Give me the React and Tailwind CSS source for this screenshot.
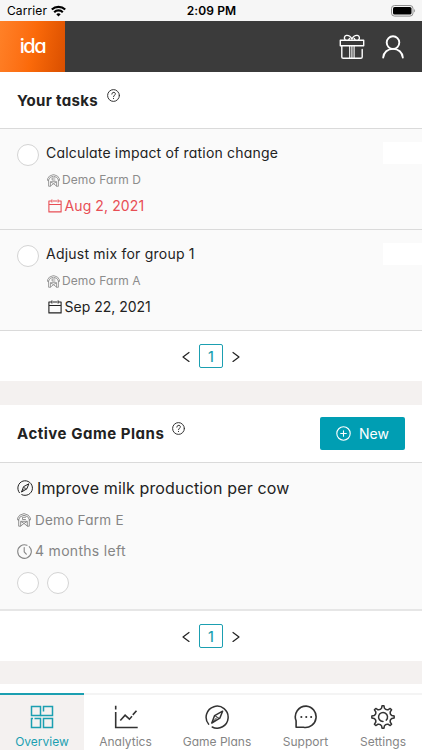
const strokeProps = {
  fill: 'none',
  stroke: 'currentColor',
  strokeLinecap: 'round',
  strokeLinejoin: 'round',
};

const WifiIcon = () => (
  <svg width="15" height="12" viewBox="0 0 15 12" fill="none" stroke="#000" strokeWidth="2.2">
    <path d="M.8 4.5a9.6 9.6 0 0 1 13.4 0" />
    <path d="M3.2 7.2a6.1 6.1 0 0 1 8.6 0" />
    <path d="M7.5 11.6 5.3 9.3a3.2 3.2 0 0 1 4.4 0Z" fill="#000" stroke="none" />
  </svg>
);

const BatteryIcon = () => (
  <svg width="25" height="12" viewBox="0 0 25 12">
    <rect x=".5" y=".5" width="21.5" height="10.6" rx="3" fill="none" stroke="#8e8e8e" />
    <rect x="2" y="2" width="18.5" height="7.6" rx="1.6" fill="#000" />
    <path d="M23.2 4v3.6c1.2-.6 1.2-3 0-3.6Z" fill="#8e8e8e" />
  </svg>
);

const GiftIcon = () => (
  <svg width="26" height="26" viewBox="0 0 26 26" {...strokeProps} strokeWidth="1.4">
    <path d="M1.3 6.2h23.4v5.6H1.3z" />
    <path d="M2.8 11.8v11.1a1.4 1.4 0 0 0 1.4 1.4h17.6a1.4 1.4 0 0 0 1.4-1.400v-7.500" />
    <path d="M10.7 12v12.1M15.100 12v12.1M12.900 12v12.1" strokeWidth="1.100" />
    <path d="M6.2 6C4.8 4.3 5.3 1.7 7.4 1.4 9.4 1.2 11.6 2.4 12.9 5M19.6 6c1.4-1.7.9-4.3-1.2-4.6-2-.2-4.2 1-5.5 3.6M9.6 6l1-1.6M16.2 6l-1-1.6" />
  </svg>
);

const UserIcon = () => (
  <svg width="22" height="24" viewBox="0 0 22 24" {...strokeProps} strokeWidth="1.9">
    <circle cx="11" cy="7.6" r="6.3" />
    <path d="M1.2 22.5c.5-5 4.3-8.6 9.8-8.6s9.3 3.600 9.800 8.600" />
  </svg>
);

const HelpIcon = () => (
  <svg width="13" height="13" viewBox="0 0 13 13" {...strokeProps} stroke="#333" strokeWidth="1">
    <circle cx="6.5" cy="6.5" r="5.9" />
    <path d="M4.8 5.1c0-2.5 3.6-2.3 3.6-.2 0 1.4-1.9 1.3-1.9 2.8M6.5 9.4v.2" />
  </svg>
);

const BarnIcon = ({ className }) => (
  <svg className={className} viewBox="0 0 14 14" {...strokeProps} strokeWidth=".9">
    <path d="M1.7 7.2.6 6.900V5.100L2.700 2.200 7 .6l4.300 1.600 2.100 2.900v1.800l-1.100.3" />
    <path d="M1.700 6.500v6.700h2V8.300h6.600v4.900h2V6.500M1.700 6.500l1.500-2.700L7 2.300l3.800 1.500 1.500 2.700" />
    <path d="M8.500 4.300h-3v2.200h3M3.800 13l3.200-2.600 3.200 2.600M4.200 8.700 7 10.400l2.800-1.700" />
  </svg>
);

const CalendarIcon = () => (
  <svg width="14" height="14" viewBox="0 0 14 14" {...strokeProps} strokeLinecap="butt" strokeWidth="1.1">
    <path d="M3.2 2H.9v10.900h12.200V2h-2.300M5 2h4M.9 5.500h12.200M3.900.4v3.200M10.100.4v3.200" />
  </svg>
);

const CompassIcon = ({ className }) => (
  <svg className={className} viewBox="0 0 24 24" {...strokeProps} strokeWidth="1.5">
    <path d="M7.200 22A11 11 0 1 0 3.600 19.100" />
    <path d="M17.600 6.200 14.800 13.200 6.800 18 9.600 10.600Z" />
    <path d="m10 10.800 4.300 2.600M7 17.800l4.600-5" strokeWidth="1" />
  </svg>
);

const ClockIcon = () => (
  <svg width="15" height="15" viewBox="0 0 15 15" {...strokeProps} strokeWidth="1.1">
    <path d="M10 1.200A6.800 6.800 0 1 0 12.200 2.600M7.200 3.600v4.200l2.100 2.400" />
  </svg>
);

const PlusCircleIcon = () => (
  <svg width="15" height="15" viewBox="0 0 15 15" {...strokeProps} strokeWidth="1.1">
    <circle cx="7.5" cy="7.5" r="6.7" />
    <path d="M7.5 4.700v5.600M4.700 7.500h5.600" />
  </svg>
);

const OverviewIcon = () => (
  <svg width="24" height="24" viewBox="0 0 24 24" {...strokeProps} strokeLinecap="butt" strokeLinejoin="miter" strokeWidth="1.5">
    <path d="M1.500 1.500h9v9h-9z" />
    <path d="M13.500 6.500v-5h9v9h-12" />
    <path d="M1.500 17v5.500h9v-9h-6M1.500 17v-3.500h1.500" />
    <path d="M13.500 13.500h9v9h-9z" />
  </svg>
);

const AnalyticsIcon = () => (
  <svg width="24" height="24" viewBox="0 0 24 24" {...strokeProps} strokeLinecap="butt" strokeLinejoin="miter" strokeWidth="1.6">
    <path d="M1.700.8v3.600M1.700 7v15.500h22M6.300 15.500l4.800-5.300 4.300 4 2.600-2.900M18.800 9.900l3.700-4.200" />
  </svg>
);

const SupportIcon = () => (
  <svg width="24" height="24" viewBox="0 0 24 24" {...strokeProps} strokeWidth="1.6">
    <path d="M12.200 1.100a10.700 10.700 0 1 1-2.700 21.200H2.100v-6.500A10.700 10.700 0 0 1 12.200 1.100Z" />
    <path d="M7.300 12h.1M12.200 12h.1M17.100 12h.1" strokeWidth="2" />
  </svg>
);

// one tooth of the gear and the curve that leads to the next, as [radius, degrees]
const polar = (r, deg) => {
  const a = (deg * Math.PI) / 180;
  return `${(12 + r * Math.sin(a)).toFixed(2)} ${(12 - r * Math.cos(a)).toFixed(2)}`;
};

const gearPath = [0, 45, 90, 135, 180, 225, 270, 315]
  .map((t, i) => `${i ? 'L' : 'M'}${polar(9, t - 9)}L${polar(11.2, t - 5)}L${polar(11.2, t + 5)}L${polar(9, t + 9)}Q${polar(7.2, t + 22.5)} ${polar(9, t + 36)}`)
  .join('');

const SettingsIcon = () => (
  <svg width="24" height="24" viewBox="0 0 24 24" {...strokeProps} strokeWidth="1.5">
    <path d={`${gearPath}Z`} />
    <path d="M15.300 15.100A4.500 4.500 0 1 0 12 16.500" />
  </svg>
);

const tasks = [
  { title: 'Calculate impact of ration change', titleClass: 'tracking-[0.19px]', farm: 'Demo Farm D', due: 'Aug 2, 2021', overdue: true },
  { title: 'Adjust mix for group 1', titleClass: 'tracking-[0.22px]', farm: 'Demo Farm A', due: 'Sep 22, 2021', overdue: false },
];

const tabs = [
  { label: 'Overview', icon: <OverviewIcon />, width: 'w-[84px]', active: true },
  { label: 'Analytics', icon: <AnalyticsIcon />, width: 'w-[83px]' },
  { label: 'Game Plans', icon: <CompassIcon className="size-6" />, width: 'w-[100px]' },
  { label: 'Support', icon: <SupportIcon />, width: 'w-[77px]' },
  { label: 'Settings', icon: <SettingsIcon />, width: 'w-[78px]' },
];

const StatusBar = () => (
  <div className="grid h-[21px] grid-cols-3 items-center bg-[#f6f6f6] pl-[7px] pr-[6px] text-black">
    <div className="flex items-center gap-[4px] text-[12px]">
      <span className="tracking-[0.1px] [font-feature-settings:normal]">Carrier</span>
      <WifiIcon />
    </div>
    <span className="text-center text-[12px] font-semibold tracking-[0.1px]">2:09 PM</span>
    <div className="flex justify-end">
      <BatteryIcon />
    </div>
  </div>
);

const TopBar = () => (
  <header className="flex h-[51px] items-center bg-[#3b3b3b]">
    <div className="flex h-full w-[65px] items-center justify-center bg-linear-100 from-[#ff8127] via-[#fb6a0a] to-[#d94f00]">
      <span className="pb-px text-[20px] leading-none font-medium tracking-[-1.4px] text-white">ida</span>
    </div>
    <div className="ml-auto flex items-center gap-[17px] pr-[18px] text-white">
      <GiftIcon />
      <UserIcon />
    </div>
  </header>
);

const Pagination = () => (
  <div className="flex h-[50px] items-center justify-center gap-[9px] text-[#222]">
    <svg width="8" height="12" viewBox="0 0 8 12" {...strokeProps} strokeWidth="1.2">
      <path d="M7 2.500 1 7l6 4.500" />
    </svg>
    <span className="flex size-6 items-center justify-center rounded-[2px] border border-[#1b9fb1] text-[14px] font-medium text-[#1b9fb1]">1</span>
    <svg width="8" height="12" viewBox="0 0 8 12" {...strokeProps} strokeWidth="1.2">
      <path d="m1 2.500 6 4.500-6 4.500" />
    </svg>
  </div>
);

const TaskRow = ({ task }) => (
  <div className="flex h-[101px] border-b border-[#dadada] bg-[#fafafa] pl-[17px]">
    <span className="mt-[15px] size-[22px] shrink-0 rounded-full border border-[#d4d4d4] bg-white" />
    <div className="pl-[7px] pt-[14px]">
      <p className={`text-[14px] leading-5 text-[#222] ${task.titleClass}`}>{task.title}</p>
      <div className="mt-[7px] flex items-center gap-[2px] pl-px leading-5 text-[#8c8c8c]">
        <BarnIcon className="size-[13px]" />
        <span className="text-[12px] tracking-[0.1px]">{task.farm}</span>
      </div>
      <div className={`mt-[6px] flex items-center gap-[3px] pl-[1.5px] leading-5 ${task.overdue ? 'text-[#e84e55]' : 'text-[#222]'}`}>
        <CalendarIcon />
        <span className={`text-[14px] ${task.overdue ? 'tracking-[0.1px]' : ''}`}>{task.due}</span>
      </div>
    </div>
    <span className="ml-auto mt-[13px] h-[22px] w-[39px] bg-white" />
  </div>
);

const BottomNav = () => (
  <nav className="flex h-[57px]">
    {tabs.map((tab) => (
      <div
        key={tab.label}
        className={`flex shrink-0 flex-col items-center border-t-2 pt-[10px] ${tab.width} ${
          tab.active ? 'border-[#1b9fb1] bg-[#f4f1f0] text-[#1b9fb1]' : 'border-[#f4f4f4] text-[#333]'
        }`}
      >
        {tab.icon}
        <span className={`mt-[5px] text-[12px] leading-4 whitespace-nowrap ${tab.active ? '' : 'text-[#858585]'}`}>{tab.label}</span>
      </div>
    ))}
  </nav>
);

const App = () => (
  <div className="h-[750px] w-[422px] overflow-hidden bg-white font-['Inter',sans-serif] [font-feature-settings:'cv11']">
    <StatusBar />
    <TopBar />

    {/* Tasks */}
    <section>
      <div className="flex h-[57px] items-center gap-[9px] border-b border-[#dadada] pl-[17px]">
        <h2 className="pt-[2px] text-[15px] font-bold tracking-[0.3px] text-[#222]">Your tasks</h2>
        <div className="pb-[10px]">
          <HelpIcon />
        </div>
      </div>
      {tasks.map((task) => (
        <TaskRow key={task.title} task={task} />
      ))}
      <Pagination />
    </section>

    <div className="h-[24px] bg-[#f4f1f0]" />

    {/* Game plans */}
    <section>
      <div className="flex h-[58px] items-center gap-[8px] border-b border-[#dadada] pl-[17px] pr-[17px]">
        <h2 className="pt-[2px] text-[15px] font-bold tracking-[0.53px] text-[#222]">Active Game Plans</h2>
        <div className="pb-[10px]">
          <HelpIcon />
        </div>
        <button className="ml-auto flex h-[33px] w-[85px] items-center justify-center gap-[8px] rounded-[2px] bg-[#009eb3] text-[14px] text-white">
          <PlusCircleIcon />
          New
        </button>
      </div>
      <div className="h-[148px] border-b-2 border-[#e6e6e6] bg-[#fafafa] pl-[17px] pt-[13px]">
        <div className="flex items-center gap-[4px] leading-6 text-[#222]">
          <CompassIcon className="size-4" />
          <p className="text-[16px] tracking-[0.14px]">Improve milk production per cow</p>
        </div>
        <div className="mt-[9px] flex items-center gap-[4px] leading-[22px] text-[#858585]">
          <BarnIcon className="size-[14px]" />
          <span className="text-[13.5px] tracking-[0.25px]">Demo Farm E</span>
        </div>
        <div className="mt-[9px] flex items-center gap-[3px] leading-[22px] text-[#858585]">
          <ClockIcon />
          <span className="text-[14px] tracking-[0.3px]">4 months left</span>
        </div>
        <div className="mt-[10px] flex gap-[8px]">
          <span className="size-[22px] rounded-full border border-[#d4d4d4] bg-white" />
          <span className="size-[22px] rounded-full border border-[#d4d4d4] bg-white" />
        </div>
      </div>
      <Pagination />
    </section>

    <div className="mb-[9px] h-[23px] bg-[#f4f1f0]" />

    <BottomNav />
  </div>
);

export default App;
